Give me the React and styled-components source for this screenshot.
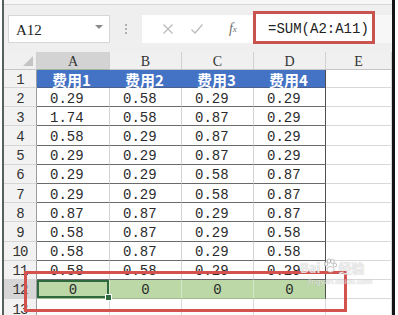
import React from "react";
import styled, { createGlobalStyle } from "styled-components";

const Global = createGlobalStyle`
  html, body { margin: 0; padding: 0; background: #fff; }
  #root { width: 398px; height: 315px; overflow: hidden; }
  * { box-sizing: border-box; }
`;

const MONO = `"Liberation Mono", "DejaVu Sans Mono", monospace`;
const SERIF = `"Liberation Serif", "DejaVu Serif", serif`;
const CJK = `"Noto Sans CJK SC", "Noto Sans", sans-serif`;

const Frame = styled.div`
  width: 398px;
  height: 315px;
  padding-left: 2px;
  padding-right: 3px;
  display: flex;
  background: #fff;
  overflow: hidden;
`;

const Sheet = styled.div`
  position: relative;
  flex: 1;
  border-left: 2px solid #55615a;
  border-right: 3px solid #141414;
  display: flex;
  flex-direction: column;
  background: #fff;
  overflow: hidden;
`;

const Toolbar = styled.div`
  height: 52px;
  flex: none;
  background: #efefef;
  display: flex;
  flex-direction: column;
`;

const TopStrip = styled.div`
  height: 5px;
  background: #f7f7f7;
  border-bottom: 1px solid #d6d6d6;
`;

const ToolRow = styled.div`
  display: flex;
  align-items: flex-start;
  padding-top: 6px;
  height: 39px;
`;

const NameBox = styled.div`
  margin-top: 4px;
  margin-left: 4px;
  width: 102px;
  height: 28px;
  background: #fff;
  border: 1px solid #d6d6d6;
  display: flex;
  align-items: center;
  justify-content: space-between;
  padding: 2px 6px 0 7px;
  font-family: ${SERIF};
  font-size: 15px;
  color: #222;
`;

const Caret = styled.span`
  width: 0;
  height: 0;
  border-left: 4px solid transparent;
  border-right: 4px solid transparent;
  border-top: 4px solid #8a8a8a;
  margin-top: -6px;
`;

const Grip = styled.div`
  width: 32px;
  height: 28px;
  margin-top: 4px;
  display: flex;
  flex-direction: column;
  align-items: center;
  justify-content: center;
  gap: 2px;
`;

const Dot = styled.span`
  width: 2px;
  height: 2px;
  background: #b0b0b0;
`;

const FxBox = styled.div`
  margin-top: 4px;
  width: 111px;
  height: 28px;
  background: #fff;
  display: flex;
  align-items: center;
  padding-left: 12px;
`;

const FxButton = styled.span`
  width: ${(p) => p.$w}px;
  display: flex;
  justify-content: center;
  align-items: center;
  color: ${(p) => (p.$dark ? "#6f6f6f" : "#b9b9b9")};
  font-family: ${SERIF};
  font-style: italic;
  font-size: 14px;
`;

const FormulaBox = styled.div`
  width: 122px;
  height: 33px;
  background: #fff;
  border: 3px solid #c9544f;
  display: flex;
  align-items: center;
  padding: 2px 0 0 12px;
  font-family: ${MONO};
  font-size: 14px;
  color: #222;
`;

const FormulaRest = styled.div`
  flex: 1;
  height: 28px;
  margin-top: 4px;
  background: #f7f7f7;
`;

const Grid = styled.div`
  display: grid;
  grid-template-columns: 33px 73px 72px 72px 72px 66px;
  grid-template-rows: 18px 18px;
  grid-auto-rows: 19.2px;
`;

const Corner = styled.div`
  position: relative;
  background: #f0f0f0;
  border-right: 1px solid #d0d0d0;
  border-bottom: 1px solid #c6c6c6;
  &::after {
    content: "";
    position: absolute;
    right: 3px;
    bottom: 3px;
    width: 0;
    height: 0;
    border-left: 10px solid transparent;
    border-bottom: 10px solid #c4c4c4;
  }
`;

const ColHead = styled.div`
  background: ${(p) => (p.$selected ? "#d3d3d3" : "#f0f0f0")};
  border-right: 1px solid #d0d0d0;
  border-bottom: 1px solid ${(p) => (p.$selected ? "#9fb59f" : "#c6c6c6")};
  display: flex;
  align-items: center;
  justify-content: center;
  padding-top: 2px;
  font-family: ${SERIF};
  font-size: 14px;
  color: #333;
`;

const RowHead = styled.div`
  background: ${(p) => (p.$selected ? "#d6d6d6" : "#f2f2f2")};
  border-right: 1px solid #9c9c9c;
  border-bottom: 1px solid #d6d6d6;
  display: flex;
  align-items: center;
  justify-content: center;
  padding-top: 3px;
  font-family: ${MONO};
  font-size: 14px;
  color: #333;
  letter-spacing: -1px;
`;

const Cell = styled.div`
  position: relative;
  display: flex;
  align-items: center;
  font-family: ${MONO};
  font-size: 14px;
  color: #2b2b2b;
  padding: 3px 0 0 13px;
  border-bottom: 1px solid #6a6a6a;
  border-right: 1px solid ${(p) => (p.$last ? "#4f4f4f" : "#d4d4d4")};
  background: #fff;
`;

const TitleCell = styled(Cell)`
  background: #4472c4;
  color: #fff;
  font-family: ${CJK};
  font-weight: 700;
  font-size: 15px;
  padding: 1px 0 0 15px;
  border-right: 1px solid ${(p) => (p.$last ? "#4f4f4f" : "#4472c4")};
  border-bottom: 1px solid #4a5f8c;
`;

const TotalCell = styled(Cell)`
  background: #bcd8a7;
  justify-content: center;
  padding: 2px 0 0 0;
  border-right: 1px solid ${(p) => (p.$last ? "#4f4f4f" : "#d7e8cb")};
  border-bottom: 1px solid #9fbd8c;
  ${(p) =>
    p.$active &&
    `
    box-shadow: inset 0 0 0 2px #2f6a3f;
    &::after {
      content: "";
      position: absolute;
      right: -3px;
      bottom: -3px;
      width: 5px;
      height: 5px;
      background: #2f6a3f;
      border: 1px solid #fff;
      z-index: 2;
    }
  `}
`;

const EmptyCell = styled.div`
  background: #fff;
  border-right: 1px solid #d8d8d8;
  border-bottom: 1px solid #d8d8d8;
`;

const Annotation = styled.div`
  position: absolute;
  left: 20px;
  top: 271px;
  width: 323px;
  height: 41px;
  border: 3px solid #d4524e;
  pointer-events: none;
  z-index: 3;
`;

const Watermark = styled.div`
  position: absolute;
  left: 296px;
  top: 258px;
  display: flex;
  flex-direction: column;
  align-items: flex-start;
  color: rgba(255, 255, 255, 0.75);
  text-shadow: 0 0 1px rgba(120, 120, 120, 0.6);
  z-index: 4;
  pointer-events: none;
`;

const WmMain = styled.div`
  display: flex;
  align-items: flex-end;
  gap: 1px;
  font-family: ${CJK};
  font-weight: 700;
  font-size: 13px;
  line-height: 1;
`;

const WmSub = styled.div`
  font-family: "Liberation Sans", sans-serif;
  font-size: 8px;
  margin-top: 3px;
  margin-left: 8px;
`;

const cols = ["A", "B", "C", "D", "E"];
const data = [
  ["0.29", "0.58", "0.29", "0.29"],
  ["1.74", "0.58", "0.87", "0.29"],
  ["0.58", "0.29", "0.87", "0.29"],
  ["0.29", "0.29", "0.87", "0.29"],
  ["0.29", "0.29", "0.58", "0.87"],
  ["0.29", "0.29", "0.58", "0.87"],
  ["0.87", "0.87", "0.29", "0.87"],
  ["0.58", "0.87", "0.29", "0.58"],
  ["0.58", "0.87", "0.29", "0.58"],
  ["0.58", "0.58", "0.29", "0.29"],
];

const XIcon = () => (
  <svg width="12" height="12" viewBox="0 0 12 12">
    <path d="M1.5 1.5 L10.5 10.5 M10.5 1.5 L1.5 10.5" stroke="currentColor" strokeWidth="1.2" fill="none" />
  </svg>
);

const CheckIcon = () => (
  <svg width="14" height="12" viewBox="0 0 14 12">
    <path d="M1.5 6.5 L5 10 L12.5 1.5" stroke="currentColor" strokeWidth="1.2" fill="none" />
  </svg>
);

const Paw = () => (
  <svg width="16" height="16" viewBox="0 0 16 16">
    <g fill="rgba(255,255,255,0.8)" stroke="rgba(120,120,120,0.55)" strokeWidth="0.8">
      <ellipse cx="4" cy="6" rx="1.7" ry="2.2" />
      <ellipse cx="7" cy="3" rx="1.7" ry="2.2" />
      <ellipse cx="10.5" cy="3.5" rx="1.7" ry="2.2" />
      <ellipse cx="13" cy="7" rx="1.6" ry="2" />
      <ellipse cx="8.5" cy="11.5" rx="3.6" ry="3" />
    </g>
  </svg>
);

export default function App() {
  return (
    <>
      <Global />
      <Frame>
        <Sheet>
          <Toolbar>
            <TopStrip />
            <ToolRow>
              <NameBox>
                A12
                <Caret />
              </NameBox>
              <Grip>
                <Dot />
                <Dot />
                <Dot />
              </Grip>
              <FxBox>
                <FxButton $w={30}>
                  <XIcon />
                </FxButton>
                <FxButton $w={34}>
                  <CheckIcon />
                </FxButton>
                <FxButton $w={44} $dark>
                  f<sub style={{ fontSize: 9 }}>x</sub>
                </FxButton>
              </FxBox>
              <FormulaBox>=SUM(A2:A11)</FormulaBox>
              <FormulaRest />
            </ToolRow>
          </Toolbar>
          <Grid>
            <Corner />
            {cols.map((c) => (
              <ColHead key={c} $selected={c === "A"}>
                {c}
              </ColHead>
            ))}

            <RowHead>1</RowHead>
            {["费用1", "费用2", "费用3", "费用4"].map((t, i) => (
              <TitleCell key={t} $last={i === 3}>
                {t}
              </TitleCell>
            ))}
            <EmptyCell />

            {data.map((row, r) => (
              <React.Fragment key={r}>
                <RowHead>{r + 2}</RowHead>
                {row.map((v, i) => (
                  <Cell key={i} $last={i === 3}>
                    {v}
                  </Cell>
                ))}
                <EmptyCell />
              </React.Fragment>
            ))}

            <RowHead $selected>12</RowHead>
            {[0, 1, 2, 3].map((i) => (
              <TotalCell key={i} $active={i === 0} $last={i === 3}>
                0
              </TotalCell>
            ))}
            <EmptyCell />

            <RowHead>13</RowHead>
            <EmptyCell />
            <EmptyCell />
            <EmptyCell />
            <EmptyCell />
            <EmptyCell />
          </Grid>
          <Annotation />
          <Watermark>
            <WmMain>
              <span>Bai</span>
              <Paw />
              <span>经验</span>
            </WmMain>
            <WmSub>jingyan.baidu.com</WmSub>
          </Watermark>
        </Sheet>
      </Frame>
    </>
  );
}
